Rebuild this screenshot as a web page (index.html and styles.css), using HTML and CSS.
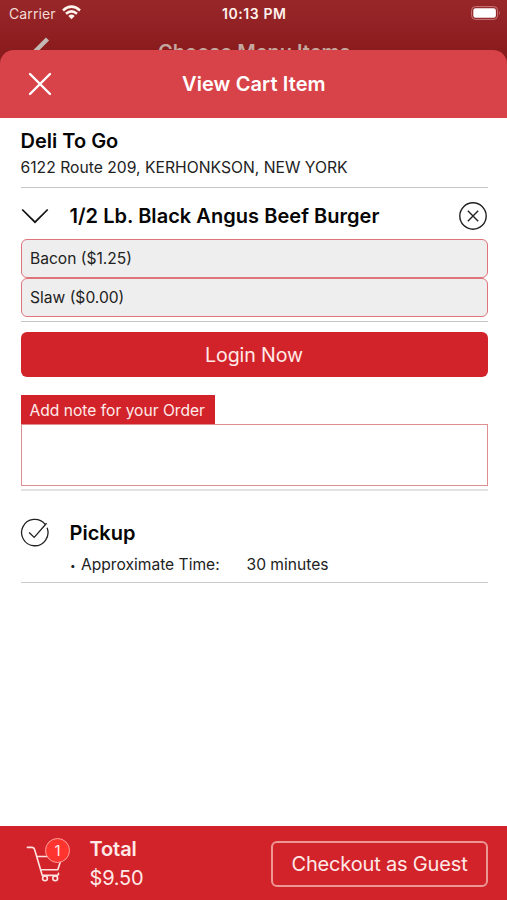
FILE: index.html
```html
<!DOCTYPE html>
<html lang="en">
<head>
<meta charset="utf-8">
<title>View Cart Item</title>
<link rel="stylesheet" href="styles.css">
</head>
<body>
<div class="app">
  <div class="backdrop">
    <div class="status">
      <div class="carrier"><span class="carrier-name">Carrier</span>
        <svg class="wifi" width="19" height="15" viewBox="0 0 19 15"><g fill="none" stroke="#fff5ef" stroke-width="2.6"><path d="M1 5.4Q9.5-2 18 5.4"/><path d="M4 8.7Q9.5 3.9 15 8.7"/></g><path fill="#fff5ef" d="M6.3 11Q9.5 8.2 12.7 11L9.5 14.2Z"/></svg>
      </div>
      <span class="clock">10:13 PM</span>
      <svg class="battery" width="30" height="14" viewBox="0 0 30 14"><rect x=".6" y=".6" width="26" height="12.8" rx="3.8" fill="none" stroke="#c5797b"/><rect x="2.3" y="2.3" width="22.6" height="9.4" rx="2.3" fill="#fff"/><path d="M28 4.7Q29.7 7 28 9.3Z" fill="#c5797b"/></svg>
    </div>
    <div class="behind">
      <svg class="back" width="20" height="28" viewBox="0 0 20 28"><path d="M16.5 3L4 15.5L16.5 28" fill="none" stroke="#c4bab5" stroke-width="4.4"/></svg>
      <span class="behind-title">Choose Menu Items</span>
    </div>
  </div>
  <main class="sheet">
    <header class="bar">
      <svg class="close" width="24" height="24" viewBox="0 0 24 24"><path d="M2 2L22 22M22 2L2 22" stroke="#fff" stroke-width="2.4" stroke-linecap="round"/></svg>
      <h1 class="title">View Cart Item</h1>
    </header>
    <div class="content">
      <section class="store">
        <h2 class="store-name">Deli To Go</h2>
        <p class="address">6122 Route 209, KERHONKSON, NEW YORK</p>
      </section>
      <section class="item">
        <div class="item-head">
          <svg class="lead" width="30" height="30" viewBox="0 0 30 30"><path d="M2.2 8.5L15 21.2L27.7 8.5" fill="none" stroke="#111" stroke-width="1.7"/></svg>
          <h2 class="item-name">1/2 Lb. Black Angus Beef Burger</h2>
          <svg class="remove" width="30" height="30" viewBox="0 0 30 30"><g fill="none" stroke="#222" stroke-width="1.4"><circle cx="15" cy="15" r="13.2"/><path d="M9.8 9.8L20.2 20.2M20.2 9.8L9.8 20.2"/></g></svg>
        </div>
        <div class="option"><span>Bacon ($1.25)</span></div>
        <div class="option"><span>Slaw ($0.00)</span></div>
      </section>
      <button class="login"><span>Login Now</span></button>
      <section class="note">
        <div class="note-label"><span>Add note for your Order</span></div>
        <div class="note-box"></div>
      </section>
      <section class="pickup">
        <div class="pickup-head">
          <svg class="lead" width="30" height="30" viewBox="0 0 30 30"><g fill="none" stroke="#222" stroke-width="1.3"><path d="M25 6.2A13.2 13.2 0 1 0 27.1 9.8M9.1 14.5L14.2 19.4L26.6 5.2"/></g></svg>
          <h2 class="pickup-name">Pickup</h2>
        </div>
        <div class="time"><span class="dot">•</span><span class="time-label">Approximate Time:</span><span class="time-value">30 minutes</span></div>
      </section>
    </div>
    <footer class="footer">
      <div class="cart">
        <svg width="46" height="48" viewBox="0 0 46 48"><g fill="none" stroke="#ffe2df" stroke-width="1.6" stroke-linejoin="round" stroke-linecap="round"><path d="M3.4 9.4H7.5Q10 9 10.6 11.5L18.3 37.4H32.4Q34.8 37.2 34.5 35.4M13.4 18.5H38L33.8 31.8H16.8"/><circle cx="21" cy="40.3" r="2.4"/><circle cx="31.2" cy="40.3" r="2.4"/></g></svg>
        <span class="badge">1</span>
      </div>
      <div class="sum"><strong class="sum-label">Total</strong><span class="sum-value">$9.50</span></div>
      <button class="checkout"><span>Checkout as Guest</span></button>
    </footer>
  </main>
</div>
</body>
</html>
```
FILE: styles.css
```css
* { box-sizing: border-box; }
body { margin: 0; font-family: Inter, "Liberation Sans", sans-serif; color: #050505; background: #fff; }
h1, h2, p { margin: 0; font-weight: 600; }
svg { display: block; flex: none; }
button { font-family: inherit; padding: 0; cursor: pointer; }
span, h1, h2, p { white-space: nowrap; }
.app { width: 507px; height: 900px; overflow: hidden; display: flex; flex-direction: column; }
.backdrop { height: 50px; flex: none; background: linear-gradient(#98272a, #8b1c1e); }
.status { height: 27px; display: grid; grid-template-columns: 1fr auto 1fr; align-items: center; padding: 0 6.5px 0 9px; }
.carrier { display: flex; align-items: center; gap: 6px; }
.carrier-name { font-size: 14px; color: #f2d9d5; letter-spacing: 0.1px; }
.wifi { margin-top: -2px; }
.clock { font-size: 14px; letter-spacing: 0.6px; margin-left: -1px; font-weight: 600; color: #fff1ec; }
.battery { justify-self: end; margin-top: -1px; }
.behind { height: 38px; display: flex; padding-left: 31px; }
.back { margin-top: 9px; }
.behind-title { margin: 13px 0 0 107px; font-size: 20px; line-height: 24px; font-weight: 600; color: #c4a8a0; }
.sheet { flex: 1; display: flex; flex-direction: column; background: linear-gradient(#8b1c1e 20px, #fff 20px); }
.bar { height: 68px; flex: none; display: flex; align-items: center; padding-left: 28px; background: #d84349; border-radius: 14px 14px 0 0; color: #fff; }
.title { margin-left: 130px; font-size: 20px; line-height: 24px; letter-spacing: 0.1px; }
.content { flex: 1; padding: 0 19.5px 0 20.5px; }
.store { height: 70px; padding-top: 9px; border-bottom: 1px solid #c6c6c6; }
.store-name { font-size: 20px; line-height: 28px; }
.address { font-size: 15.7px; line-height: 25px; font-weight: 400; color: #222; }
.item { height: 134px; border-bottom: 1px solid #c6c6c6; }
.item-head { height: 50.5px; display: flex; align-items: center; padding-top: 5px; }
.lead { margin-left: -0.5px; }
.item-name { flex: 1; margin-left: 19.5px; font-size: 20px; line-height: 28px; letter-spacing: 0.04px; }
.option { height: 39.5px; display: flex; align-items: center; padding-left: 8.5px; font-size: 15.6px; color: #222; background: #eee; border: 1px solid #df747b; border-radius: 6px; }
.option + .option { margin-top: -0.5px; }
.login { display: block; width: 100%; height: 45px; margin-top: 10px; font-size: 19.6px; letter-spacing: -0.1px; color: #ffe9e7; background: #d2232a; border: 0; border-radius: 6px; }
.note { height: 114px; margin-top: 18px; }
.note-label { width: 194px; height: 30px; padding-left: 9px; display: flex; align-items: center; font-size: 15.6px; color: #ffebe9; background: #d2232a; }
.note-box { height: 62px; margin-top: -1px; border: 1px solid #e08d91; }
.note::after { content: ""; display: block; height: 2px; margin-top: 3px; background: #e2e2e2; }
.pickup { height: 74px; border-bottom: 1px solid #cbcbcb; padding-top: 9px; }
.pickup-head { display: flex; align-items: center; height: 30px; }
.pickup-name { margin-left: 19.5px; font-size: 20px; line-height: 28px; }
.time { display: flex; align-items: center; height: 22px; margin-top: 5.5px; padding-left: 49.5px; font-size: 15.6px; color: #222; }
.dot { width: 11px; font-size: 10px; }
.time-label { width: 165.5px; }
.footer { height: 74px; flex: none; display: flex; align-items: center; padding: 1px 19px 0 24px; background: #d2232a; color: #ffe9e7; }
.cart { position: relative; width: 46px; height: 48px; margin-bottom: 4px; }
.badge { position: absolute; left: 21px; top: 0; width: 25px; height: 25px; border: 1.5px solid #ff9f9b; border-radius: 50%; background: #ff342e; font-size: 15px; line-height: 23px; text-align: center; }
.sum { flex: 1; margin-left: 19.5px; display: flex; flex-direction: column; font-size: 20px; line-height: 29px; }
.sum-label { font-weight: 600; letter-spacing: -0.1px; }
.sum-value { letter-spacing: -0.2px; }
.checkout { width: 217px; height: 46px; border: 2px solid #ec9794; border-radius: 6px; background: none; color: #ffe9e7; font-size: 20px; letter-spacing: -0.17px; }
```
